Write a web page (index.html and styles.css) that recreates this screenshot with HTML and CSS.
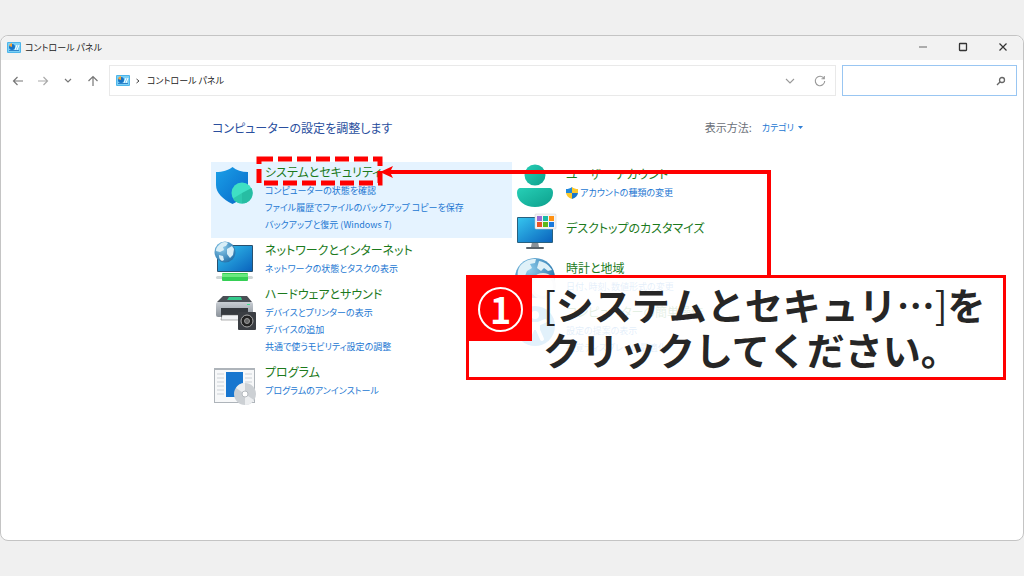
FILE: index.html
```
<!DOCTYPE html>
<html lang="ja">
<head>
    <meta charset="UTF-8">
    <meta name="viewport" content="width=device-width, initial-scale=1.0">
    <title>コントロール パネル</title>
    <link rel="stylesheet" href="styles.css">
</head>
<body>
    <svg class="defs" aria-hidden="true">
        <defs>
            <linearGradient id="blue" x1="0" y1="0" x2="1" y2="1"><stop offset="0" stop-color="#35c4ee"/><stop offset="1" stop-color="#0a63bd"/></linearGradient>
            <linearGradient id="shieldBlue" x1="0" y1="0" x2="1" y2="1"><stop offset="0" stop-color="#1aa0e8"/><stop offset="1" stop-color="#0868c8"/></linearGradient>
            <linearGradient id="teal" x1="0" y1="0" x2="1" y2="1"><stop offset="0" stop-color="#27cfb6"/><stop offset="1" stop-color="#0c9f8c"/></linearGradient>
            <linearGradient id="gray" x1="0" y1="0" x2="0" y2="1"><stop offset="0" stop-color="#c9ced4"/><stop offset="1" stop-color="#8b929a"/></linearGradient>
            <radialGradient id="globe" cx=".35" cy=".3" r=".8"><stop offset="0" stop-color="#8fcdec"/><stop offset="1" stop-color="#1c6ba5"/></radialGradient>
            <symbol id="cpl" viewBox="0 0 14 11">
                <rect width="14" height="11" rx="1" fill="#4db5ea"/>
                <rect x="1" y="1" width="12" height="9" fill="#7dd0f5"/>
                <circle cx="5" cy="5" r="3" fill="#1673c5"/>
                <path d="M5 5V1a4 4 0 0 0-3 3z" fill="#f5a33a"/>
                <path d="M8 8l2-5M10 8l2-5" stroke="#fff" stroke-width="1"/>
                <rect x="2" y="8" width="10" height="1" fill="#2e83c9"/>
            </symbol>
        </defs>
    </svg>

    <div class="window">
        <header class="titlebar">
            <svg class="cpl-icon"><use href="#cpl"/></svg>
            <span class="title">コントロール パネル</span>
            <div class="window-buttons">
                <button aria-label="最小化"><svg width="10" height="10" viewBox="0 0 10 10"><path d="M1 5h8" stroke="#666"/></svg></button>
                <button aria-label="最大化"><svg width="10" height="10" viewBox="0 0 10 10"><rect x="1.5" y="1.5" width="7" height="7" rx=".5" fill="none" stroke="#333" stroke-width="1.3"/></svg></button>
                <button aria-label="閉じる"><svg width="10" height="10" viewBox="0 0 10 10"><path d="M1.5 1.5l7 7M8.5 1.5l-7 7" stroke="#333" stroke-width="1.2"/></svg></button>
            </div>
        </header>

        <nav class="toolbar">
            <div class="nav-buttons">
                <button aria-label="戻る"><svg width="12" height="12" viewBox="0 0 12 12"><path d="M11 6H2M5.5 2L1.5 6l4 4" fill="none" stroke="#777" stroke-width="1.2"/></svg></button>
                <button aria-label="進む"><svg width="12" height="12" viewBox="0 0 12 12"><path d="M1 6h9M6.5 2l4 4-4 4" fill="none" stroke="#aaa" stroke-width="1.2"/></svg></button>
                <button aria-label="履歴"><svg width="12" height="12" viewBox="0 0 12 12"><path d="M3 4l3 3 3-3" fill="none" stroke="#777" stroke-width="1.2"/></svg></button>
                <button aria-label="上へ"><svg width="12" height="12" viewBox="0 0 12 12"><path d="M6 11V2M1.5 6L6 1.5 10.5 6" fill="none" stroke="#777" stroke-width="1.2"/></svg></button>
            </div>
            <div class="address">
                <svg class="cpl-icon"><use href="#cpl"/></svg>
                <svg class="crumb" width="6" height="8" viewBox="0 0 6 8"><path d="M1.5 2L4 4 1.500 6" fill="none" stroke="#444"/></svg>
                <span class="path">コントロール パネル</span>
                <button aria-label="以前の場所"><svg width="12" height="12" viewBox="0 0 12 12"><path d="M2 4l4 4 4-4" fill="none" stroke="#999" stroke-width="1.1"/></svg></button>
                <button aria-label="更新"><svg width="12" height="12" viewBox="0 0 12 12"><path d="M10 3.500A4.700 4.700 0 1 0 10.700 6M10.300 1v2.800H7.500" fill="none" stroke="#999" stroke-width="1.1"/></svg></button>
            </div>
            <form class="search">
                <input type="text" aria-label="検索">
                <button type="button" aria-label="検索"><svg width="10" height="10" viewBox="0 0 10 10"><circle cx="6" cy="4" r="2.5" fill="none" stroke="#666" stroke-width="1.3"/><path d="M4.2 5.8L1 9" stroke="#666" stroke-width="1.3"/></svg></button>
            </form>
        </nav>

        <main class="panel">
            <div class="panel-head">
                <h1>コンピューターの設定を調整します</h1>
                <div class="view-by">
                    <span>表示方法:</span>
                    <button>カテゴリ<svg width="5" height="3" viewBox="0 0 5 3"><path d="M0 0h5L2.5 3z" fill="#2f7fd6"/></svg></button>
                </div>
            </div>

            <div class="columns">
                <div class="column">
                    <section class="category active">
                        <svg class="icon" viewBox="0 0 42 42">
                            <path d="M18.5 5c4 3.500 9 5 15.500 5v13c0 8-6 14.500-15.500 19C9 37.500 2 31 2 23V10c7 0 12-1.500 16.500-5z" fill="url(#shieldBlue)"/>
                            <circle cx="28" cy="31" r="10.5" fill="#3fe0c4"/>
                            <path d="M28 31l9.500-5A10.500 10.500 0 0 1 28 41.500z" fill="#27bda3"/>
                            <path d="M28 31v10.500a10.500 10.500 0 0 1-9-5z" fill="#2ec9ad"/>
                        </svg>
                        <div class="links">
                            <h2><a href="#">システムとセキュリティ</a></h2>
                            <a href="#">コンピューターの状態を確認</a>
                            <a href="#">ファイル履歴でファイルのバックアップ コピーを保存</a>
                            <a href="#">バックアップと復元 (Windows 7)</a>
                        </div>
                    </section>
                    <section class="category">
                        <svg class="icon" viewBox="0 0 42 42">
                            <rect x="3" y="5" width="36" height="27" rx="1" fill="#28506f"/>
                            <rect x="4" y="6" width="34" height="25" fill="url(#blue)"/>
                            <circle cx="11" cy="12" r="10.5" fill="url(#globe)"/>
                            <path d="M5 5c4-4 7-3 9-2l-2 3-3 1 1 3-4 2-4-1c0-3 1-4 3-6zM13 9l5-3 2 3-1 6-3 3-3-4zM5 15l4 1 1 4-2 1c-2-1-3-3-3-5z" fill="#d8eef7"/>
                            <rect x="2" y="36" width="37" height="3" rx="1.5" fill="#cfd6d6"/>
                            <rect x="8" y="33" width="26" height="8" rx="1" fill="#35cf55"/>
                            <rect x="8" y="34" width="26" height="3" fill="#6be880"/>
                        </svg>
                        <div class="links">
                            <h2><a href="#">ネットワークとインターネット</a></h2>
                            <a href="#">ネットワークの状態とタスクの表示</a>
                        </div>
                    </section>
                    <section class="category">
                        <svg class="icon" viewBox="0 0 42 42">
                            <path d="M9 12h24l5 6H3z" fill="#4a4f55"/>
                            <path d="M15 13h12l1 3H13z" fill="#34c98b"/>
                            <rect x="2" y="18" width="37" height="15" rx="2" fill="url(#gray)"/>
                            <path d="M7 24h27v9H7z" fill="#35393e"/>
                            <path d="M8 31h24l1 5H7z" fill="#f1f3f5" stroke="#666" stroke-width=".5"/>
                            <rect x="33" y="20" width="3" height="1" fill="#3ee08a"/>
                            <rect x="24" y="28" width="18" height="18" rx="1" fill="#3b3e43"/>
                            <circle cx="33" cy="37" r="6" fill="#222" stroke="#aaa"/>
                            <circle cx="33" cy="37" r="2.5" fill="#666" stroke="#999"/>
                        </svg>
                        <div class="links">
                            <h2><a href="#">ハードウェアとサウンド</a></h2>
                            <a href="#">デバイスとプリンターの表示</a>
                            <a href="#">デバイスの追加</a>
                            <a href="#">共通で使うモビリティ設定の調整</a>
                        </div>
                    </section>
                    <section class="category">
                        <svg class="icon" viewBox="0 0 42 42">
                            <rect x="0" y="6" width="41" height="35" fill="#aeb4ba"/>
                            <rect x="1" y="8" width="39" height="32" fill="#f7f8f9"/>
                            <path d="M3 12h7M3 16h7M3 20h7M3 24h7M3 28h7M3 32h7M31 12h7M31 16h7M31 20h7" stroke="#ccd1d6"/>
                            <rect x="12" y="10" width="17" height="25" fill="#1876cf"/>
                            <circle cx="31" cy="32" r="11" fill="#ccd0d4"/>
                            <path d="M31 32l-9-6a11 11 0 0 1 9-5zM31 32l9 6a11 11 0 0 1-9 5z" fill="#eceef0"/>
                            <circle cx="31" cy="32" r="3" fill="#fff" stroke="#b5babf"/>
                        </svg>
                        <div class="links">
                            <h2><a href="#">プログラム</a></h2>
                            <a href="#">プログラムのアンインストール</a>
                        </div>
                    </section>
                </div>

                <div class="column column-right">
                    <section class="category spaced">
                        <svg class="icon" viewBox="0 0 42 42">
                            <circle cx="20" cy="11" r="10.5" fill="url(#teal)"/>
                            <path d="M6 24h28c3 0 4 2 4 5 0 8-8 14-18 14S2 37 2 29c0-3 1-5 4-5z" fill="url(#teal)"/>
                        </svg>
                        <div class="links">
                            <h2><a href="#">ユーザー アカウント</a></h2>
                            <a href="#" class="with-shield"><svg width="12" height="12" viewBox="0 0 12 12"><path d="M6 0v6H0V2c2.5 0 4-.5 6-2z" fill="#2389dc"/><path d="M6 0c2 1.500 3.500 2 6 2v4H6z" fill="#fcc92b"/><path d="M0 6h6v6C2.500 11 .5 9 0 6z" fill="#fcc92b"/><path d="M12 6H6v6c3.500-1 5.500-3 6-6z" fill="#1b77c8"/></svg>アカウントの種類の変更</a>
                        </div>
                    </section>
                    <section class="category single">
                        <svg class="icon" viewBox="0 0 42 42">
                            <path d="M17 28h6l1 5h-8z" fill="#8a9299"/>
                            <rect x="11" y="33" width="18" height="2" rx="1" fill="#59636b"/>
                            <rect x="2" y="3" width="36" height="26" rx="1" fill="#28607f"/>
                            <rect x="3" y="4" width="34" height="24" fill="url(#blue)"/>
                            <rect x="20" y="0" width="21" height="15" rx="1" fill="#f4f4f4" stroke="#ccc" stroke-width=".5"/>
                            <rect x="22" y="2" width="5" height="5" fill="#9a69d6"/><rect x="28" y="2" width="5" height="5" fill="#19b9a5"/><rect x="34" y="2" width="5" height="5" fill="#ff9112"/>
                            <rect x="22" y="8" width="5" height="5" fill="#ea5425"/><rect x="28" y="8" width="5" height="5" fill="#5fb81b"/><rect x="34" y="8" width="5" height="5" fill="#1979dc"/>
                        </svg>
                        <div class="links">
                            <h2><a href="#">デスクトップのカスタマイズ</a></h2>
                        </div>
                    </section>
                    <section class="category">
                        <svg class="icon" viewBox="0 0 42 42">
                            <circle cx="20" cy="20" r="20" fill="url(#globe)"/>
                            <path d="M5 8c5-6 10-7 16-7l-1 4-5 1 2 4-5 3-2 5-7 1c-1-4 0-8 2-11zM24 3c6 1 10 4 13 9l-4 1-4-3-3 3-4-3z" fill="#dff1f8"/>
                            <circle cx="28" cy="28" r="13" fill="#e4e6e8"/>
                            <circle cx="28" cy="28" r="10" fill="#fff"/>
                        </svg>
                        <div class="links">
                            <h2><a href="#">時計と地域</a></h2>
                            <a href="#">日付、時刻、数値形式の変更</a>
                        </div>
                    </section>
                    <section class="category">
                        <svg class="icon" viewBox="0 0 42 42">
                            <circle cx="20" cy="24" r="20" fill="#1689dc"/>
                            <circle cx="20" cy="13" r="4" fill="#fff"/>
                            <path d="M10 19l7 3v6l-4 9M30 19l-7 3v6l4 9M17 22h6M17 26h6" fill="none" stroke="#fff" stroke-width="4" stroke-linejoin="round" stroke-linecap="round"/>
                        </svg>
                        <div class="links">
                            <h2><a href="#">コンピューターの簡単操作</a></h2>
                            <a href="#">設定の提案の表示</a>
                            <a href="#">視覚ディスプレイの最適化</a>
                        </div>
                    </section>
                </div>
            </div>

            <!-- step marker: dashed frame, arrow and callout -->
            <svg class="marker" width="520" height="124" viewBox="0 0 520 124" aria-hidden="true">
                <rect x="3" y="3" width="121" height="24" fill="none" stroke="#f00" stroke-width="5" stroke-dasharray="14 5"/>
                <path d="M513 120V16H132" fill="none" stroke="#f00" stroke-width="4"/>
                <path d="M124 16l13-6-3 6 3 6z" fill="#f00"/>
            </svg>
            <div class="callout">
                <div class="step"><span>1</span></div>
                <p><span class="bracket">[</span>システムとセキュリ…<span class="bracket">]</span>を<br>クリックしてください。</p>
            </div>
        </main>
    </div>
</body>
</html>
```
FILE: styles.css
```
* { box-sizing: border-box; }
body {
    margin: 0;
    padding: 35px 0;
    min-height: 100vh;
    display: flex;
    flex-direction: column;
    background-color: #f0f0f0;
    font-family: "Noto Sans CJK JP", sans-serif;
    font-feature-settings: "palt";
    font-size: 9px;
    color: #222;
}
.defs { position: absolute; width: 0; height: 0; }
a { color: #2377d2; text-decoration: none; }
a:hover { text-decoration: underline; }
button {
    display: flex;
    align-items: center;
    justify-content: center;
    background: none;
    border: none;
    padding: 0;
    font: inherit;
    font-feature-settings: inherit;
    cursor: pointer;
}
.window {
    flex: 1;
    background-color: #fff;
    border: 1px solid #c4c4c4;
    border-radius: 8px;
}
.titlebar {
    display: flex;
    align-items: center;
    gap: 4px;
    height: 24px;
    padding: 0 0 2px 6px;
    background-color: #f2f2f2;
    border-radius: 8px 8px 0 0;
}
.cpl-icon { width: 14px; height: 11px; flex: none; }
.window-buttons { display: flex; margin-left: auto; }
.window-buttons button { width: 40px; height: 22px; }

.toolbar {
    display: flex;
    align-items: center;
    padding: 5px 6px 0 4px;
}
.nav-buttons { display: flex; width: 104px; }
.nav-buttons button { width: 25px; height: 31px; }
.address {
    flex: 1;
    display: flex;
    align-items: center;
    height: 31px;
    padding-left: 6px;
    border: 1px solid #e9e9e9;
}
.crumb { margin: 0 6px 0 5px; }
.path { flex: 1; }
.address button { width: 30px; height: 29px; }
.search {
    display: flex;
    width: 175px;
    height: 31px;
    margin-left: 6px;
    border: 1px solid #99c6f2;
}
.search input {
    flex: 1;
    min-width: 0;
    border: none;
    outline: none;
    padding: 0 8px;
    font: inherit;
}
.search button { width: 30px; }

.panel {
    position: relative;
    width: 602px;
    max-width: 100%;
    margin: 0 auto;
    padding-top: 21px;
}
.panel-head {
    display: flex;
    align-items: center;
    justify-content: space-between;
    height: 20px;
    margin-bottom: 25px;
    padding: 0 10px 0 1px;
}
h1 {
    margin: 0;
    font-size: 12px;
    font-weight: 400;
    color: #2a4f9e;
}
.view-by { display: flex; align-items: center; gap: 10px; color: #6b7078; }
.view-by span { font-size: 11px; }
.view-by button { gap: 4px; color: #2377d2; }

.columns { display: grid; grid-template-columns: 1fr 1fr; }
.column { display: flex; flex-direction: column; gap: 2px; }
.column-right { padding-top: 2px; }
.category {
    display: flex;
    align-items: flex-start;
    gap: 9px;
    padding-left: 3px;
}
.active { background-color: #e5f3ff; }
.spaced { margin-bottom: 6px; }
.single .links { padding-top: 4px; }
.icon { width: 42px; height: 42px; flex: none; overflow: visible; }
.links {
    display: flex;
    flex-direction: column;
    align-items: flex-start;
    padding-bottom: 5px;
    line-height: 17px;
}
.links h2 {
    margin: 0;
    font-size: 12px;
    font-weight: 400;
    line-height: 20px;
}
.links h2 a { color: #1c7a1c; }
.with-shield { display: flex; align-items: center; gap: 2px; }

.marker { position: absolute; left: 45px; top: 60px; }
.callout {
    position: absolute;
    left: 255px;
    top: 179px;
    display: flex;
    align-items: flex-start;
    gap: 11px;
    width: 540px;
    background-color: rgba(255, 255, 255, 0.88);
    border: 3px solid #f00;
    font-feature-settings: normal;
}
.step {
    display: flex;
    align-items: center;
    justify-content: center;
    flex: none;
    width: 63px;
    height: 63px;
    background-color: #f00;
}
.step span {
    width: 45px;
    height: 45px;
    border: 2px solid #fff;
    border-radius: 50%;
    font-size: 36px;
    font-weight: 700;
    line-height: 38px;
    text-align: center;
    color: #fff;
}
.callout p {
    margin: 0;
    padding: 3px 0 6px;
    font-size: 38px;
    font-weight: 700;
    line-height: 45px;
    white-space: nowrap;
    color: #262626;
}
.bracket { font-weight: 400; }
```
